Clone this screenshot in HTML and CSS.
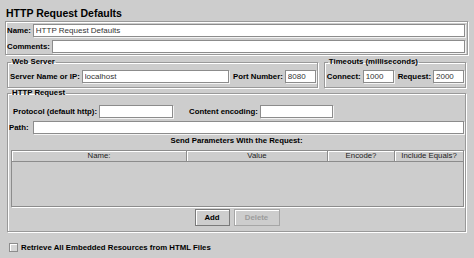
FILE: index.html
```html
<!DOCTYPE html>
<html lang="en">
<head>
  <meta charset="UTF-8" />
  <meta name="viewport" content="width=device-width, initial-scale=1.0"/>
  <title>HTTP Request Defaults</title>
  <link rel="stylesheet" href="styles.css">
</head>
<body>

  <h1 class="title">HTTP Request Defaults</h1>

  <div class="names">
    <div class="row">
      <label>Name:</label>
      <input class="field grow" type="text" value="HTTP Request Defaults">
    </div>
    <div class="row">
      <label>Comments:</label>
      <input class="field grow" type="text" value="">
    </div>
  </div>

  <div class="servers">
    <fieldset class="group web">
      <legend>Web Server</legend>
      <div class="row">
        <label>Server Name or IP:</label>
        <input class="field grow" type="text" value="localhost">
        <label class="gap">Port Number:</label>
        <input class="field small" type="text" value="8080">
      </div>
    </fieldset>

    <fieldset class="group timeouts">
      <legend>Timeouts (milliseconds)</legend>
      <div class="row">
        <label>Connect:</label>
        <input class="field small" type="text" value="1000">
        <label class="gap">Request:</label>
        <input class="field small" type="text" value="2000">
      </div>
    </fieldset>
  </div>

  <fieldset class="group http">
    <legend>HTTP Request</legend>
    <div class="row protocol">
      <label>Protocol (default http):</label>
      <input class="field proto" type="text" value="">
      <label class="wide-gap">Content encoding:</label>
      <input class="field enc" type="text" value="">
    </div>
    <div class="row path">
      <label>Path:</label>
      <input class="field grow" type="text" value="">
    </div>

    <p class="params-title">Send Parameters With the Request:</p>

    <div class="params">
      <div class="params-head">
        <div>Name:</div>
        <div>Value</div>
        <div>Encode?</div>
        <div>Include Equals?</div>
      </div>
    </div>

    <div class="buttons">
      <button class="btn add">Add</button>
      <button class="btn del" disabled>Delete</button>
    </div>
  </fieldset>

  <label class="check">
    <span class="box"></span>
    Retrieve All Embedded Resources from HTML Files
  </label>

</body>
</html>
```

FILE: styles.css
```css
* { box-sizing: border-box; }

body {
  margin: 0;
  background-color: #cdcdcd;
  font-family: "Liberation Sans", Arial, sans-serif;
  font-size: 7.8px;
  font-weight: bold;
  color: #000;
}

.title {
  margin: 0;
  padding: 7px 0 0 6px;
  height: 21px;
  font-size: 10.5px;
  line-height: 13px;
}

/* name + comments box */
.names {
  margin: 0 6px 0 5px;
  padding: 2px 2px 1px 1px;
  border: 1px solid #999;
  box-shadow: inset 1px 1px 0 #fff, 1px 1px 0 #fff;
}

.row {
  display: flex;
  align-items: center;
  height: 13px;
}

.row + .row {
  margin-top: 3px;
}

.row label {
  white-space: nowrap;
  margin-right: 2px;
}

.row .gap {
  margin-left: 4px;
}

.row .wide-gap {
  margin-left: 16px;
}

.field {
  height: 13px;
  margin: 0;
  padding: 0 2px;
  border: 1px solid #8c8c8c;
  background-color: #fff;
  box-shadow: 1px 1px 0 #f4f4f4;
  font-family: inherit;
  font-size: 8px;
  font-weight: normal;
  color: #333;
  outline: none;
}

.grow {
  flex: 1;
  width: 0;
}

.small {
  width: 31px;
}

.proto {
  width: 74px;
}

.enc {
  width: 73px;
}

/* etched group boxes */
.group {
  margin: 0;
  min-width: 0;
  border: 1px solid #999;
  box-shadow: inset 1px 1px 0 #fff, 1px 1px 0 #fff;
}

.group legend {
  padding: 0 1px;
  line-height: 10px;
}

.servers {
  display: flex;
  gap: 6px;
  margin: 2px 8px 0 7px;
}

.web,
.timeouts {
  padding: 3px 1px 4px 2px;
}

.web {
  flex: 1;
}

.web legend {
  margin-left: 1px;
}

.timeouts {
  flex: none;
}

.timeouts legend {
  margin-left: 1px;
}

.http {
  margin: 0 8px 0 7px;
  padding: 7px 1px 5px 1px;
}

.http legend {
  margin-left: 2px;
}

.protocol {
  padding-left: 4px;
}

.path {
  margin-top: 4px;
}

.path label {
  margin-right: 4px;
}

.params-title {
  margin: 2px 0 0;
  line-height: 10px;
  text-align: center;
}

.params {
  margin: 4px 0 0 2px;
  height: 57px;
  border: 1px solid #8c8c8c;
  box-shadow: 1px 1px 0 #fff;
}

.params-head {
  display: grid;
  grid-template-columns: 175px 141px 67px 1fr;
}

.params-head div {
  height: 11px;
  line-height: 10px;
  text-align: center;
  font-weight: normal;
  color: #222;
  border-right: 1px solid #8c8c8c;
  border-bottom: 1px solid #8c8c8c;
  box-shadow: inset 1px 1px 0 #fff;
}

.params-head div:last-child {
  border-right: none;
}

.buttons {
  display: flex;
  justify-content: center;
  gap: 4px;
  margin-top: 2px;
  padding-left: 1px;
}

.btn {
  height: 17px;
  padding: 0;
  border: 1px solid #7a7a7a;
  background-color: #cdcdcd;
  box-shadow: inset 1px 1px 0 #fff;
  font-family: inherit;
  font-size: 7.8px;
  font-weight: bold;
  color: #000;
}

.add {
  width: 35px;
}

.del {
  width: 46px;
}

.btn:disabled {
  color: #9c9c9c;
  border-color: #a6a6a6;
}

.check {
  display: flex;
  align-items: center;
  gap: 3px;
  margin: 11px 0 0 9px;
  height: 9px;
}

.box {
  width: 9px;
  height: 9px;
  border: 1px solid #8c8c8c;
  background-color: #d6d6d6;
  box-shadow: inset 1px 1px 0 #fff;
}
```
